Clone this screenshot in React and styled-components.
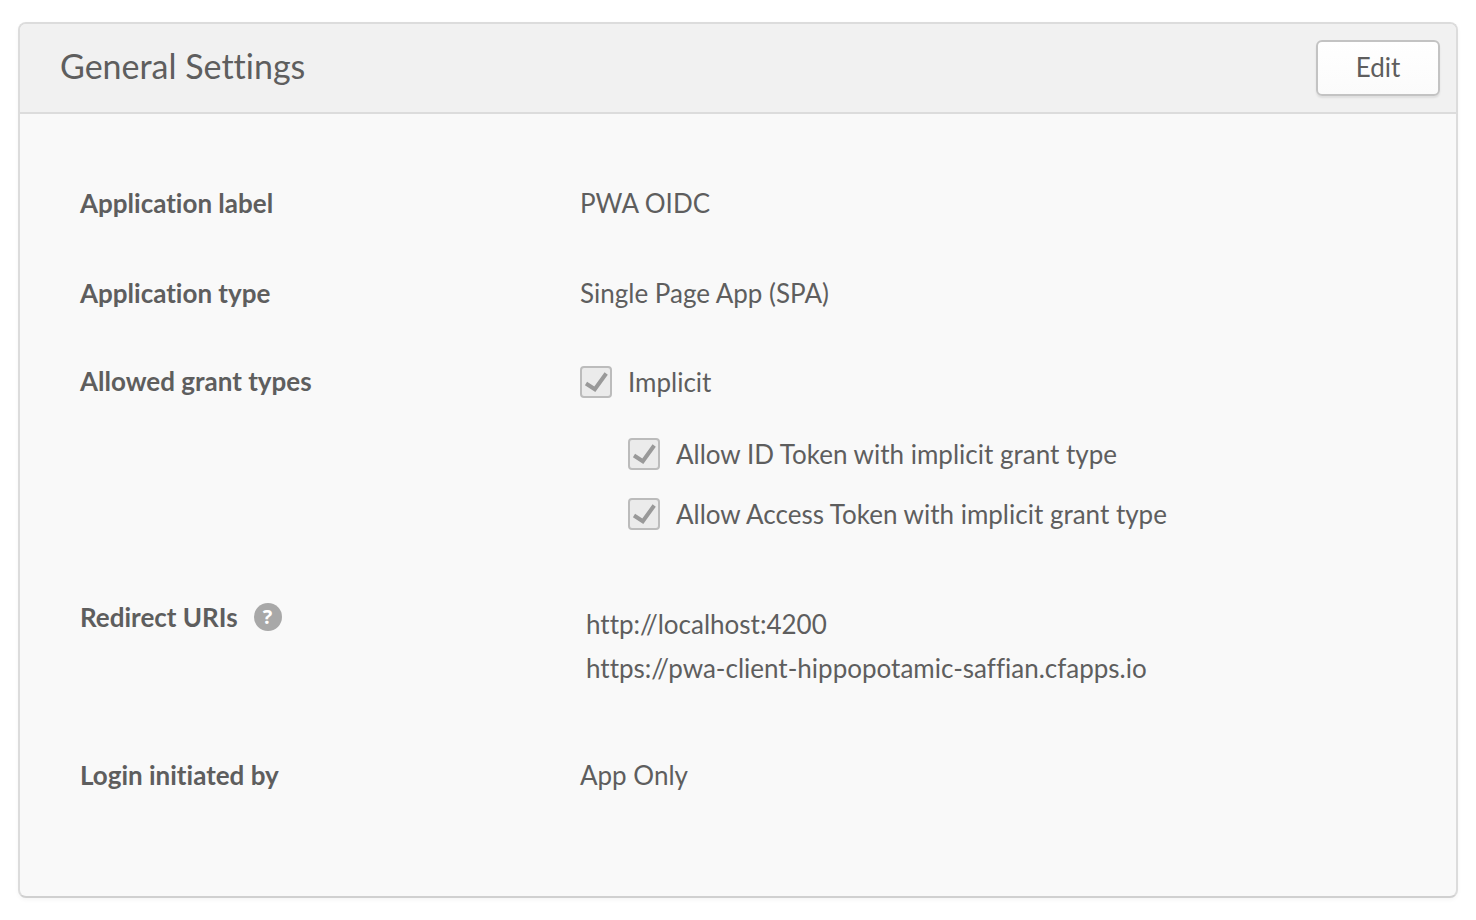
import React from "react";
import styled, { createGlobalStyle } from "styled-components";

const Global = createGlobalStyle`
  * { box-sizing: border-box; }
  body { margin: 0; background: #fff; color: #5e5e5e; font-family: Lato, "Liberation Sans", sans-serif; font-size: 26px; line-height: 30px; font-variant-ligatures: none; }
`;
const Panel = styled.section`
  margin: 22px 18px; border: 2px solid #dcdcdc; border-bottom-color: #d0d0d0; border-radius: 8px;
  background: #f9f9f9; box-shadow: 0 2px 4px rgba(0,0,0,.04); overflow: hidden;
`;
const Header = styled.header`
  display: flex; align-items: center; justify-content: space-between;
  padding: 16px 16px 16px 40px; height: 90px; background: #f1f1f1; border-bottom: 2px solid #dcdcdc;
`;
const Title = styled.h1`
  margin: 0; padding-bottom: 4px; font-size: 34px; line-height: 40px; font-weight: 400;
`;
const EditButton = styled.button`
  width: 124px; height: 56px; padding: 0 0 2px; border: 2px solid #c3c3c3; border-radius: 6px;
  background: linear-gradient(#fff, #fbfbfb); box-shadow: 0 2px 2px rgba(0,0,0,.08);
  font: inherit; color: inherit;
`;
const Fields = styled.dl`
  margin: 0; padding: 74px 60px 106px; display: flex; flex-direction: column;
`;
const Row = styled.div`
  display: flex; margin-bottom: ${(p) => p.$gap || 0}px;
`;
const Label = styled.dt`
  width: 500px; flex: none; font-weight: 700; display: flex; align-items: center; gap: 16px; align-self: flex-start;
`;
const Value = styled.dd`
  margin: 0; flex: 1;
`;
const Help = styled.button`
  width: 28px; height: 28px; padding: 0; border: 0; border-radius: 50%; background: #a8a8a8; color: #fff;
  font: 700 20px/28px "Open Sans", sans-serif;
`;
const Check = styled.label`
  display: flex; align-items: center; gap: 16px; height: 32px;
  margin-left: ${(p) => (p.$nested ? 48 : 0)}px;
  margin-top: ${(p) => p.$top || 0}px;
`;
const Box = styled.span`
  display: grid; width: 32px; height: 32px; flex: none;
  > * { grid-area: 1 / 1; }
`;
const Input = styled.input`
  appearance: none; margin: 0; border: 2px solid #bcbcbc; border-radius: 4px; background: #ebebeb;
`;
const Uris = styled.ul`
  list-style: none; margin: 0; padding: 0 6px; line-height: 44px;
`;

function GrantOption({ label, ...rest }) {
  return (
    <Check {...rest}>
      <Box>
        <Input type="checkbox" defaultChecked disabled />
        <svg width="32" height="32" viewBox="0 0 32 32" fill="none" stroke="#999" strokeWidth="4" aria-hidden="true">
          <path d="M6 17.5 L14.8 23.2 L26.2 7.5" />
        </svg>
      </Box>
      {label}
    </Check>
  );
}

export default function App() {
  return (
    <>
      <Global />
      <Panel>
        <Header>
          <Title>General Settings</Title>
          <EditButton type="button">Edit</EditButton>
        </Header>
        <Fields>
          <Row $gap={60}><Label>Application label</Label><Value>PWA OIDC</Value></Row>
          <Row $gap={58}><Label>Application type</Label><Value>Single Page App (SPA)</Value></Row>
          <Row $gap={72}>
            <Label>Allowed grant types</Label>
            <Value>
              <GrantOption label="Implicit" />
              <GrantOption $nested $top={40} label="Allow ID Token with implicit grant type" />
              <GrantOption $nested $top={28} label="Allow Access Token with implicit grant type" />
            </Value>
          </Row>
          <Row $gap={70}>
            <Label>Redirect URIs <Help type="button" aria-label="Help">?</Help></Label>
            <Value>
              <Uris>
                <li>http://localhost:4200</li>
                <li>https://pwa-client-hippopotamic-saffian.cfapps.io</li>
              </Uris>
            </Value>
          </Row>
          <Row><Label>Login initiated by</Label><Value>App Only</Value></Row>
        </Fields>
      </Panel>
    </>
  );
}
